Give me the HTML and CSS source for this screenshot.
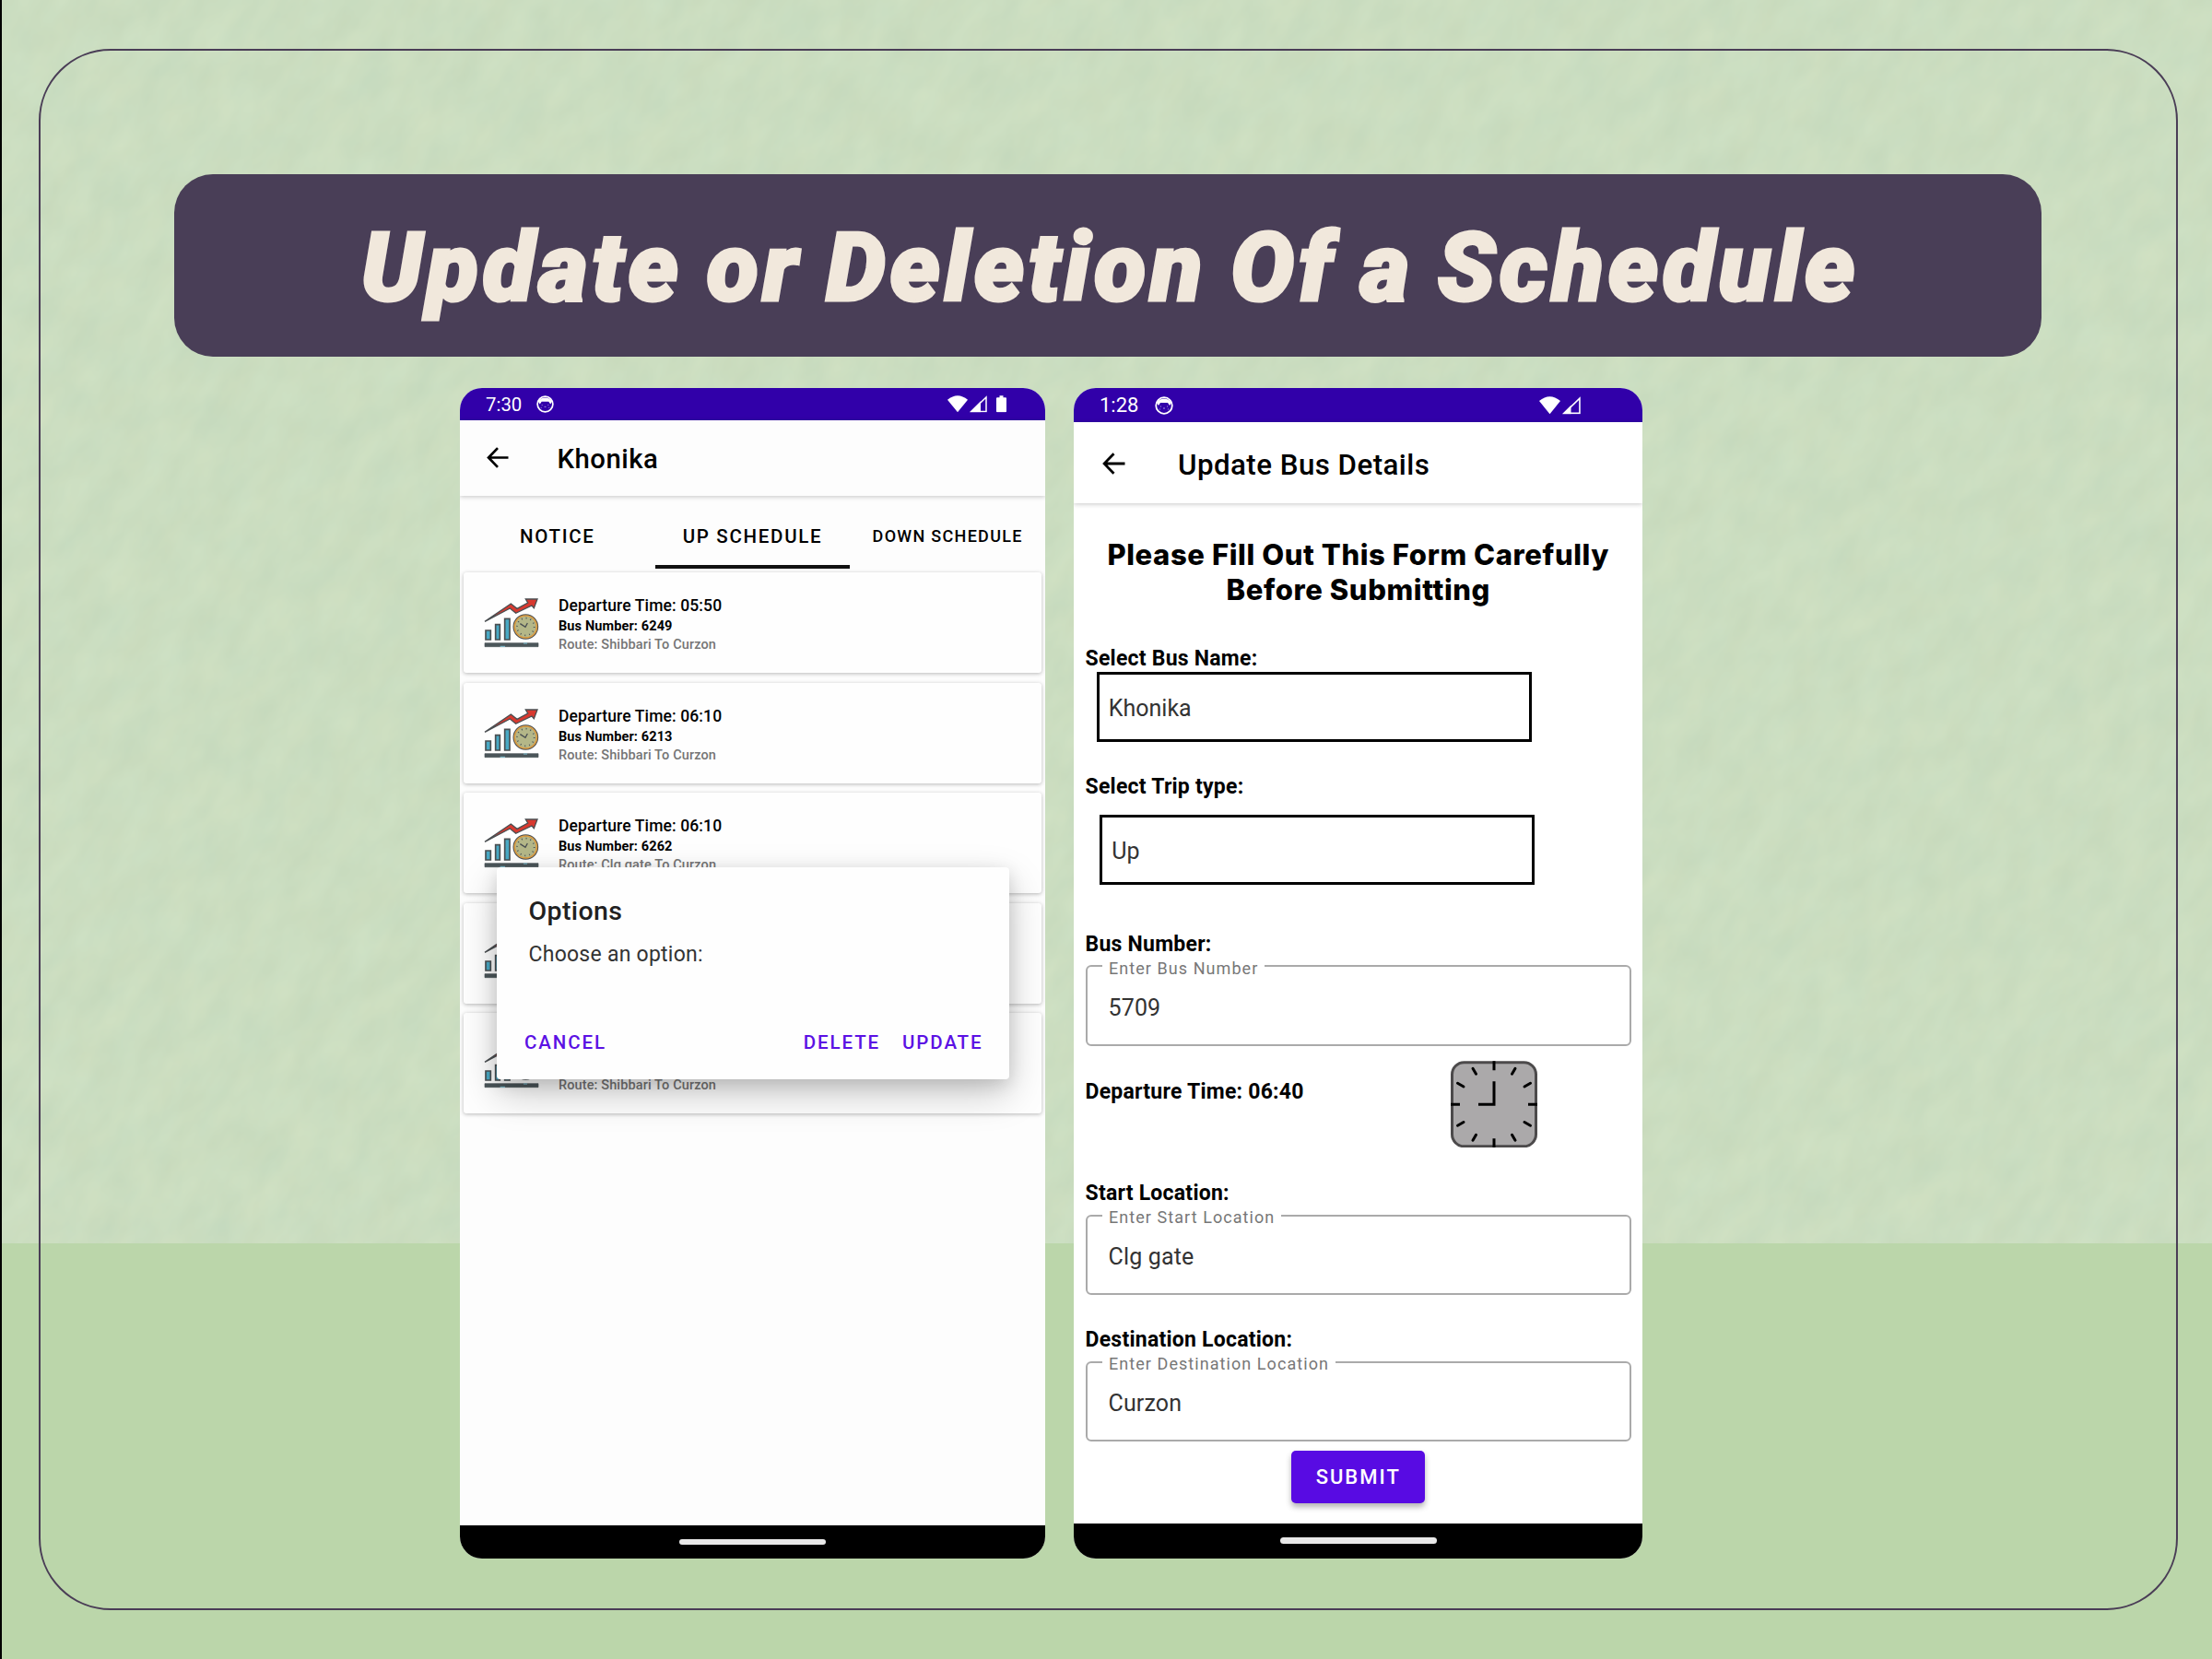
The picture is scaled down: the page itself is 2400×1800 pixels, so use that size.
FILE: index.html
```html
<!DOCTYPE html>
<html lang="en">
<head>
<meta charset="utf-8">
<title>Update or Deletion Of a Schedule</title>
<link rel="stylesheet" href="styles.css">
</head>
<body>
<svg width="0" height="0" class="defs">
  <symbol id="trend" viewBox="45 55 180 165">
    <path d="M48 134 133 76 153 92 188 73 181 61H219L208 90 201 82 149 107 130 91Z" fill="#d8392f" stroke="#4a4f52" stroke-width="4"/>
    <path d="M51 163h16v30h-16zM83 144h14v49h-14zM113 125h16v68h-16z" fill="#49a9c4" stroke="#4a4f52" stroke-width="5"/>
    <circle cx="181" cy="151" r="38" fill="#b4b788" stroke="#4a4f52" stroke-width="7"/>
    <circle cx="181" cy="151" r="36" fill="none" stroke="#e0a044" stroke-width="5"/>
    <circle cx="181" cy="151" r="28" fill="none" stroke="#4a4f52" stroke-width="5" stroke-dasharray="3 11.66"/>
    <path d="M163 141 180 152 187 139" fill="none" stroke="#4a4f52" stroke-width="4"/>
    <path d="M48 204h174v12H48z" fill="#4b565a" stroke="#4b565a" stroke-width="2"/>
    <path d="M98 215h16M174 205h12" stroke="#7fc3d6" stroke-width="3"/>
  </symbol>
  <symbol id="back" viewBox="0 0 24 24"><path d="M12 1.2 1.6 12 12 22.8M1.6 12H24" fill="none" stroke="#000" stroke-width="2.8"/></symbol>
  <symbol id="cat" viewBox="0 0 20 20"><circle cx="10" cy="10" r="8.8" fill="none" stroke="#fff" stroke-width="1.8"/><path d="M2 7C5 1 15 1 18 7L16 10 14 7H6L4 10Z" fill="#fff"/><path d="M6 11h1M13 11h1M9 13h2M5 14h1M14 14h1" stroke="#a99be0" stroke-width="1"/></symbol>
  <symbol id="wifi" viewBox="0 0 22 18"><path d="M0 4.5Q11-4.500 22 4.500L11 18Z" fill="#fff"/></symbol>
  <symbol id="signal" viewBox="0 0 19 18"><path d="M18 1.800V17.200H2Z" fill="none" stroke="#fff" stroke-width="1.500"/><path d="M0 18 12 6V18Z" fill="#fff"/></symbol>
  <symbol id="signal-low" viewBox="0 0 19 18"><path d="M18 1.800V17.200H2Z" fill="none" stroke="#fff" stroke-width="1.500"/><path d="M0 18 9 9V18Z" fill="#fff"/></symbol>
  <symbol id="battery" viewBox="0 0 11 18"><path d="M3.500 0h4v2H10q1 0 1 1V17q0 1-1 1H1q-1 0-1-1V3q0-1 1-1H3.500Z" fill="#fff"/></symbol>
</svg>
<main class="slide">
  <svg class="paper" width="2398" height="1349" viewBox="0 0 2398 1349">
    <filter id="grain" x="0" y="0" width="100%" height="100%" color-interpolation-filters="sRGB">
      <feTurbulence type="fractalNoise" baseFrequency="0.02 0.036" numOctaves="3" seed="8"/>
      <feColorMatrix values="0.042 0.020 0 0 0.764  0.036 0 0 0 0.849  0.034 -0.012 0 0 0.742  0 0 0 0 1"/>
    </filter>
    <rect x="-1500" y="-1500" width="4400" height="4400" transform="rotate(-58 1199 674)" filter="url(#grain)"/>
  </svg>
  <div class="frame"></div>
  <h1 class="banner">Update or Deletion Of a Schedule</h1>
  <div class="phones">
    <section class="phone phone-list">
      <div class="status">
        <span>7:30</span><svg class="cat"><use href="#cat"/></svg>
        <svg class="wifi"><use href="#wifi"/></svg><svg class="signal"><use href="#signal"/></svg><svg class="battery"><use href="#battery"/></svg>
      </div>
      <header class="appbar"><svg class="back"><use href="#back"/></svg><span class="title">Khonika</span></header>
      <nav class="tabs"><div class="tab">NOTICE</div><div class="tab active">UP SCHEDULE</div><div class="tab small">DOWN SCHEDULE</div></nav>
      <div class="cards">
        <article class="card"><svg class="trend"><use href="#trend"/></svg><div><p class="dep">Departure Time: 05:50</p><p class="num">Bus Number: 6249</p><p class="route">Route: Shibbari To Curzon</p></div></article>
        <article class="card"><svg class="trend"><use href="#trend"/></svg><div><p class="dep">Departure Time: 06:10</p><p class="num">Bus Number: 6213</p><p class="route">Route: Shibbari To Curzon</p></div></article>
        <article class="card"><svg class="trend"><use href="#trend"/></svg><div><p class="dep">Departure Time: 06:10</p><p class="num">Bus Number: 6262</p><p class="route">Route: Clg gate To Curzon</p></div></article>
        <article class="card"><svg class="trend"><use href="#trend"/></svg></article>
        <article class="card"><svg class="trend"><use href="#trend"/></svg><div><p class="dep">&nbsp;</p><p class="num">&nbsp;</p><p class="route">Route: Shibbari To Curzon</p></div></article>
      </div>
      <div class="dialog">
        <h2>Options</h2>
        <p>Choose an option:</p>
        <div class="actions"><span>CANCEL</span><span class="delete">DELETE</span><span class="update">UPDATE</span></div>
      </div>
      <div class="navbar"><i></i></div>
    </section>
    <section class="phone phone-form">
      <div class="status">
        <span>1:28</span><svg class="cat"><use href="#cat"/></svg>
        <svg class="wifi"><use href="#wifi"/></svg><svg class="signal"><use href="#signal-low"/></svg>
      </div>
      <header class="appbar"><svg class="back"><use href="#back"/></svg><span class="title">Update Bus Details</span></header>
      <form class="form">
        <h2>Please Fill Out This Form Carefully<br>Before Submitting</h2>
        <label class="l1">Select Bus Name:</label>
        <div class="select s1">Khonika</div>
        <label class="l2">Select Trip type:</label>
        <div class="select s2">Up</div>
        <label class="l3">Bus Number:</label>
        <div class="field"><small>Enter Bus Number</small><span>5709</span></div>
        <div class="timerow"><label>Departure Time: 06:40</label>
          <svg class="clock" viewBox="0 0 94 94"><rect x="1.500" y="1.500" width="91" height="91" rx="13" fill="#aba9aa" stroke="#4c4a4b" stroke-width="3"/><path d="M47 0v10M47 84v10M0 47h10M84 47h10M47 22v25H30" fill="none" stroke="#000" stroke-width="3"/><path d="M24 8l3.500 6M70 8l-3.500 6M24 86l3.500-6M70 86l-3.500-6M7.500 24l6.500 3.700M86.500 24l-6.500 3.700M7.500 70l6.500-3.700M86.500 70l-6.500-3.700" stroke="#000" stroke-width="3" stroke-linecap="round"/></svg>
        </div>
        <label class="l4">Start Location:</label>
        <div class="field"><small>Enter Start Location</small><span>Clg gate</span></div>
        <label class="l5">Destination Location:</label>
        <div class="field"><small>Enter Destination Location</small><span>Curzon</span></div>
        <div class="submit">SUBMIT</div>
      </form>
      <div class="navbar"><i></i></div>
    </section>
  </div>
</main>
</body>
</html>
```
FILE: styles.css
```css
* { box-sizing: border-box; }
body { margin: 0; width: 2400px; height: 1800px; overflow: hidden; font-family: Roboto, "Liberation Sans", sans-serif; color: #000; }
h1, h2, p { margin: 0; font-weight: 500; }
svg { display: block; flex: none; }
.defs { position: absolute; }
.slide { position: relative; width: 2400px; height: 1800px; padding: 189px 185px 0 187px; border-left: 2px solid #000; background: #bbd6aa; }
.paper { position: absolute; left: 0; top: 0; }
.frame { position: absolute; left: 40px; top: 53px; width: 2321px; height: 1694px; border: 2px solid #4a3d56; border-radius: 78px; }
.banner { position: relative; height: 197.500px; padding: 6px 0 0 5px; border-radius: 42px; background: #493e57; color: #f1e8dc; display: flex; align-items: center; justify-content: center; font: italic 900 103px/120px Roboto, sans-serif; letter-spacing: 4.700px; word-spacing: -4px; -webkit-text-stroke: 3px #f1e8dc; white-space: nowrap; }
.phones { position: relative; display: flex; gap: 31px; margin: 34.500px 0 0 310px; height: 1269.500px; }
.phone { position: relative; display: flex; flex-direction: column; background: #fdfdfd; border-radius: 24px; overflow: hidden; white-space: nowrap; }
.phone-list { width: 635px; }
.phone-form { width: 617px; background: #fff; }
.status { display: flex; align-items: flex-start; height: 34.700px; padding: 8px 42px 0 28px; background: #3100a9; color: #fff; font-size: 20.400px; line-height: 20px; }
.cat { width: 19px; height: 19px; margin-left: 15.500px; }
.wifi { width: 22px; height: 18.500px; margin-left: auto; }
.signal { width: 19px; height: 18.500px; margin-left: 2px; }
.battery { width: 11px; height: 18.500px; margin-left: 10px; }
.phone-form .status { height: 37.300px; padding: 9px 67px 0 28px; font-size: 22px; line-height: 20px; }
.phone-form .cat { width: 20px; height: 20px; margin-left: 17.500px; }
.phone-form .wifi { width: 23px; height: 19.500px; }
.phone-form .signal { width: 20px; height: 19.500px; }
.appbar { position: relative; display: flex; align-items: center; height: 82.300px; padding: 0 29px; box-shadow: 0 1px 5px rgba(0,0,0,.22); font-weight: 500; font-size: 29.300px; letter-spacing: .5px; }
.phone-form .appbar { height: 88px; padding: 1px 31px 0; font-size: 31.300px; letter-spacing: .450px; background: #fff; }
.back { width: 24px; height: 23px; }
.title { margin-left: 52.500px; padding-top: 3px; }
.phone-form .back { width: 25px; height: 24px; }
.phone-form .title { margin-left: 57px; }
.tabs { display: grid; grid-template-columns: 1fr 1fr 1fr; height: 79px; margin-bottom: 4.500px; font-weight: 500; font-size: 20.500px; letter-spacing: 1.700px; }
.tab { display: flex; align-items: center; justify-content: center; padding-top: 13px; border-bottom: 4px solid transparent; }
.active { border-color: #111; }
.small { font-size: 18px; letter-spacing: 1.300px; }
.cards { display: flex; flex-direction: column; gap: 10.400px; padding: 0 4px; }
.card { display: flex; height: 109px; padding: 22px; background: #fefefe; border-radius: 3px; box-shadow: 0 1px 4px rgba(0,0,0,.28); }
.trend { width: 60px; height: 55px; margin: 5px 21px 0 0; }
.card p { letter-spacing: .120px; }
.card .dep { margin-top: 2px; font-size: 17.500px; line-height: 24px; }
.card .num { margin-top: 1px; font-size: 14.500px; line-height: 20px; font-weight: 700; }
.card .route { font-size: 14.500px; line-height: 20px; color: #757575; }
.dialog { position: absolute; left: 39.500px; top: 519.700px; width: 556px; height: 230.300px; padding: 31px 28px 0 35px; background: #fefefe; border-radius: 4px; box-shadow: 0 16px 40px rgba(0,0,0,.22), 0 5px 18px rgba(0,0,0,.12); }
.dialog h2 { font-size: 28.500px; line-height: 34px; letter-spacing: .400px; color: #212121; }
.dialog p { margin-top: 15px; font-size: 23px; line-height: 30px; font-weight: 400; letter-spacing: .25px; color: #333; }
.actions { display: flex; margin: 68px 0 0 -4.500px; font-size: 20.500px; font-weight: 500; line-height: 24px; letter-spacing: 1.900px; color: #5b11e4; }
.delete { margin-left: auto; }
.update { margin-left: 24px; }
.navbar { display: flex; justify-content: center; margin-top: auto; height: 35.500px; padding-top: 14.500px; background: #000; }
.navbar i { width: 159px; height: 6.500px; border-radius: 4px; background: #e8e8e8; }
.phone-form .navbar { height: 37.500px; padding-top: 15.300px; }
.phone-form .navbar i { width: 170px; height: 7px; }
.form { display: flex; flex-direction: column; padding: 37px 12px 0 12.500px; }
.form h2 { font: 800 31px/38px Inter, sans-serif; letter-spacing: .600px; text-align: center; }
label { font-size: 23px; line-height: 28px; margin-bottom: -2px; font-weight: 700; letter-spacing: .240px; }
.select { display: flex; align-items: center; width: 472px; height: 76px; border: 3.500px solid #000; padding: 3px 0 0 10px; font-size: 25px; color: #333; }
.l1 { margin-top: 42px; }
.s1 { margin: 1.700px 0 0 12.300px; }
.l2 { margin-top: 35.400px; }
.s2 { margin: 17.600px 0 0 15.800px; }
.l3 { margin-top: 51px; }
.field { position: relative; display: flex; align-items: center; height: 87.200px; margin-top: 10.500px; border: 2px solid #aaa; border-radius: 6px; padding: 4px 23px 0; font-size: 25px; letter-spacing: .150px; color: #333; }
.field small { position: absolute; left: 16.500px; top: -10.500px; padding: 0 7px; background: #fff; font-size: 18px; line-height: 24px; color: #777; letter-spacing: 1.060px; }
.timerow { display: flex; justify-content: space-between; margin-top: 16px; padding-right: 102px; }
.timerow label { margin-top: 20px; }
.clock { width: 94px; height: 94.500px; }
.l4 { margin-top: 36px; }
.l5 { margin-top: 35.600px; }
.submit { display: flex; align-items: center; justify-content: center; align-self: center; width: 145px; height: 57px; margin-top: 9.400px; border-radius: 5px; background: #580be3; color: #fff; font-size: 22px; font-weight: 500; letter-spacing: 2px; box-shadow: 0 4px 6px rgba(0,0,0,.3); }
```
